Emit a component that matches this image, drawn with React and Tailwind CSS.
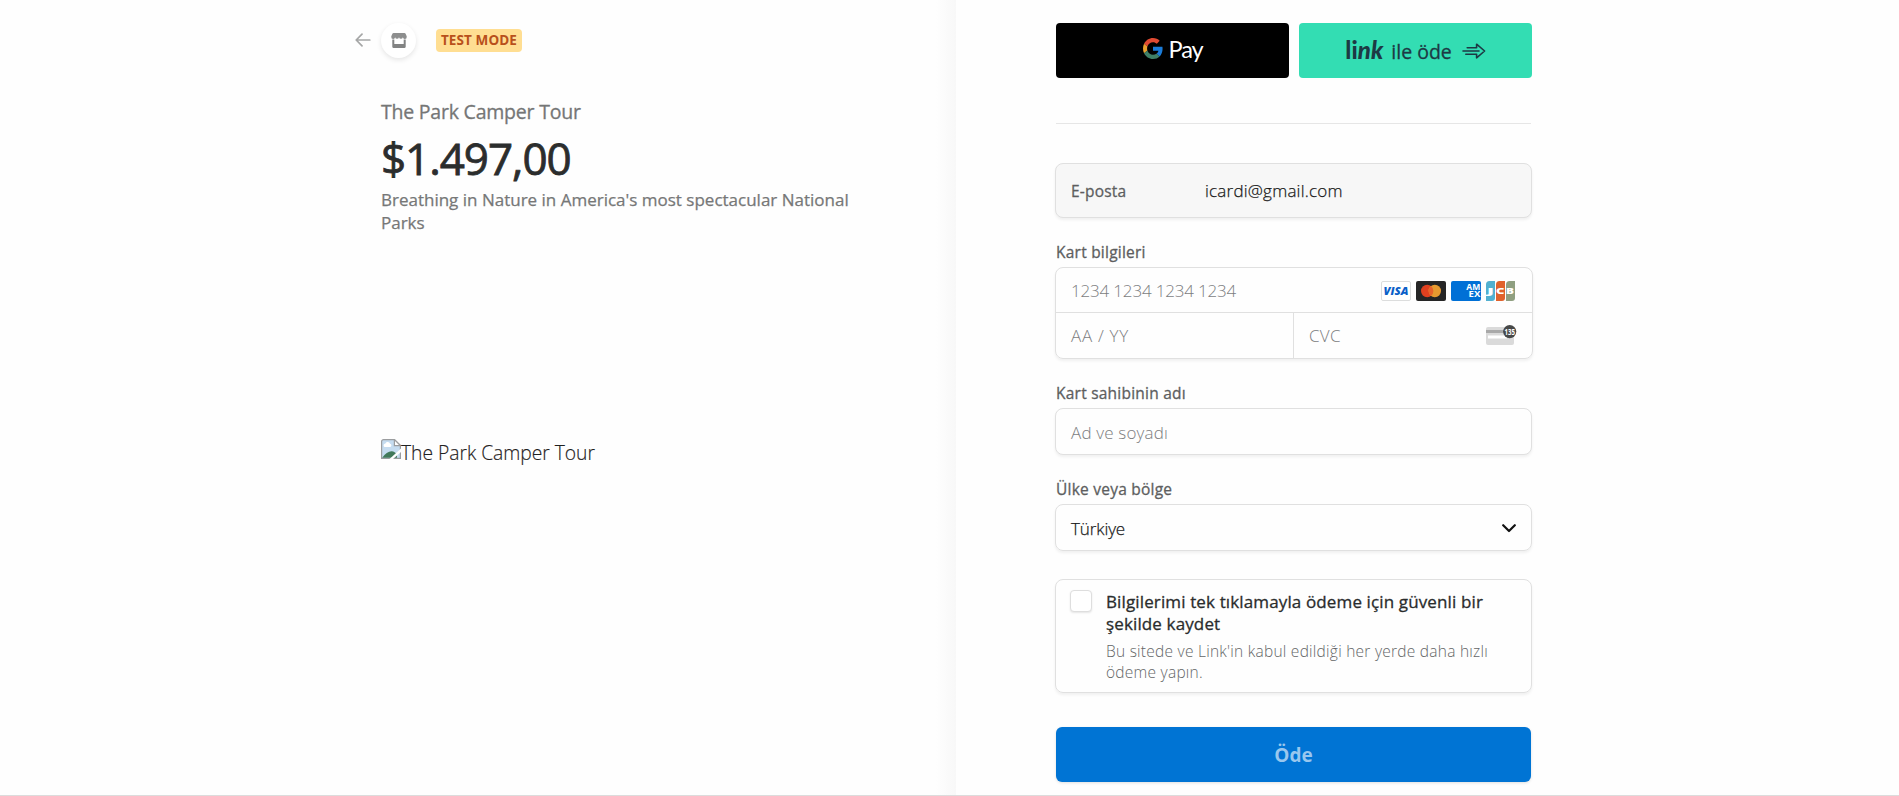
import React from "react";

function BackArrow() {
  return (
    <svg width="16" height="14" viewBox="0 0 16 14" fill="none" stroke="#a5a6a6" strokeWidth="1.7" strokeLinecap="round" strokeLinejoin="round">
      <path d="M14.8 7H1.4M7 1.2L1.2 7L7 12.8" />
    </svg>
  );
}

function StoreIcon() {
  return (
    <svg width="16" height="15" viewBox="0 0 16 15">
      <path d="M2.6 0h10.8c.6 0 1 .3 1.2.8l1.1 2.4v.8a1.9 1.9 0 0 1-3.8.3a2 2 0 0 1-3.9 0a2 2 0 0 1-3.9 0A1.9 1.9 0 0 1 .3 4v-.8L1.4 .8C1.6 .3 2 0 2.6 0z" fill="#8d8e8e" />
      <path d="M1.3 6.6h2V11h9.4V6.6h2v7.2c0 .7-.4 1.1-1.1 1.1H2.4c-.7 0-1.1-.4-1.1-1.1z" fill="#828383" />
    </svg>
  );
}

function GoogleG() {
  return (
    <svg width="20" height="21" viewBox="0 0 48 48" preserveAspectRatio="none">
      <path fill="#e04a32" d="M24 9.5c3.54 0 6.71 1.22 9.21 3.6l6.85-6.85C35.9 2.38 30.47 0 24 0 14.62 0 6.51 5.38 2.56 13.22l7.98 6.19C12.43 13.72 17.74 9.5 24 9.5z" />
      <path fill="#1a7bd8" d="M46.98 24.55c0-1.57-.15-3.09-.38-4.55H24v9.02h12.94c-.58 2.96-2.26 5.48-4.78 7.18l7.73 6c4.51-4.18 7.09-10.36 7.09-17.65z" />
      <path fill="#eaa02e" d="M10.53 28.59c-.48-1.45-.76-2.99-.76-4.59s.27-3.14.76-4.59l-7.98-6.19C.92 16.46 0 20.12 0 24c0 3.88.92 7.54 2.56 10.78l7.97-6.19z" />
      <path fill="#3f7f66" d="M24 48c6.48 0 11.93-2.13 15.89-5.81l-7.73-6c-2.15 1.45-4.92 2.3-8.16 2.3-6.26 0-11.57-4.22-13.47-9.91l-7.98 6.19C6.51 42.62 14.62 48 24 48z" />
    </svg>
  );
}

function LinkArrow() {
  return (
    <svg width="24" height="16" viewBox="0 0 24 16" fill="none" stroke="#1d3944" strokeWidth="1.6" strokeLinejoin="round" strokeLinecap="round">
      <path d="M5.2 4.8H14.6V1.2L22.6 8L14.6 14.8V11.2H3.8M1 8H17" />
    </svg>
  );
}

function Visa() {
  return (
    <svg width="30" height="20" viewBox="0 0 30 20">
      <rect x=".5" y=".5" width="29" height="19" rx="1.5" fill="#fff" stroke="#dcdddd" />
      <text x="15" y="14" textAnchor="middle" textLength="25" lengthAdjust="spacingAndGlyphs" fontFamily="Open Sans" fontWeight="800" fontStyle="italic" fontSize="11" fill="#0a5fc8">VISA</text>
    </svg>
  );
}

function Mastercard() {
  return (
    <svg width="30" height="20" viewBox="0 0 30 20">
      <rect width="30" height="20" rx="2" fill="#252525" />
      <circle cx="11.2" cy="10" r="6.2" fill="#e0401f" />
      <circle cx="18.8" cy="10" r="6.2" fill="#e79a2f" />
      <path d="M15 5.1a6.2 6.2 0 0 1 0 9.8a6.2 6.2 0 0 1 0-9.8z" fill="#e8622a" />
    </svg>
  );
}

function Amex() {
  return (
    <svg width="30" height="20" viewBox="0 0 30 20" fontFamily="Open Sans" fontWeight="700" fontSize="8" fill="#fff">
      <rect width="30" height="20" rx="2" fill="#0070d6" />
      <text x="15.3" y="8.8" textLength="14" lengthAdjust="spacingAndGlyphs">AM</text>
      <text x="17.6" y="16.4" textLength="11.8" lengthAdjust="spacingAndGlyphs">EX</text>
    </svg>
  );
}

function Jcb() {
  return (
    <svg width="29" height="20" viewBox="0 0 29 20" fontFamily="Open Sans" fontWeight="800" fontSize="9" fill="#fff" textAnchor="middle">
      <path d="M3.5 0H9V17a3 3 0 0 1-3 3H0V3.5A3.5 3.5 0 0 1 3.5 0z" fill="#52b0d0" />
      <path d="M13.5 0H19V17a3 3 0 0 1-3 3H10V3.5A3.5 3.5 0 0 1 13.5 0z" fill="#e0622c" />
      <path d="M23.5 0H29V17a3 3 0 0 1-3 3H20V3.5A3.5 3.5 0 0 1 23.5 0z" fill="#8f9f80" />
      <text x="4.6" y="13.4" textLength="7" lengthAdjust="spacingAndGlyphs">J</text>
      <text x="14.3" y="13.4" textLength="8.5" lengthAdjust="spacingAndGlyphs">C</text>
      <text x="24" y="13.4" textLength="8" lengthAdjust="spacingAndGlyphs">B</text>
    </svg>
  );
}

function CvcIcon() {
  return (
    <svg width="31" height="20" viewBox="0 0 31 20">
      <rect y="2" width="28" height="18" rx="2" fill="#dadada" />
      <rect y="5" width="28" height="3" fill="#a9a9a9" />
      <rect x="2" y="10.5" width="19" height="3" fill="#fff" />
      <circle cx="23.7" cy="6.6" r="6.6" fill="#474848" />
      <text x="23.7" y="9.6" textAnchor="middle" textLength="10.5" lengthAdjust="spacingAndGlyphs" fontFamily="Open Sans" fontWeight="700" fontSize="8" fill="#fff">135</text>
    </svg>
  );
}

function BrokenImage() {
  return (
    <svg width="20" height="20" viewBox="0 0 20 20">
      <path d="M.6 2.6A2 2 0 0 1 2.6.6H13.4L19.4 6.6V19.4H.6z" fill="#c5dcf0" stroke="#9b9d9f" strokeWidth="1.2" />
      <path d="M3.4 8a2 2 0 0 1 1-3.6a2.6 2.6 0 0 1 4.7.4A1.7 1.7 0 0 1 9.4 8z" fill="#fff" />
      <path d="M1.2 18.8C4 14.5 7.5 12.2 10.5 12.2C13 12.2 14.5 13.5 16 15.5V18.8z" fill="#41795a" />
      <path d="M13.4.6V6.6H19.4z" fill="#fff" stroke="#9b9d9f" strokeWidth="1.2" />
      <path d="M20 9.5V13L12 20H8.5z" fill="#fefefe" />
    </svg>
  );
}

function Label({ children }) {
  return <div className="h-5 pl-px text-[15.5px] leading-5 tracking-[0.23px] text-[#5d5e5f] [-webkit-text-stroke:0.3px]">{children}</div>;
}

const box = "rounded-lg border border-[#e0e0e0] shadow-[0_2px_3px_rgba(0,0,0,0.06)]";

function Product() {
  return (
    <section className="flex h-full w-[956px] shrink-0 flex-col bg-[linear-gradient(to_right,#fefefe_936px,#f8f8f8_956px)] pl-[355px]">
      <header className="mt-[22px] flex h-9 items-center">
        <BackArrow />
        <div className="ml-2.5 flex size-[35px] items-center justify-center rounded-full bg-white shadow-[0_2px_5px_rgba(0,0,0,0.1)]">
          <StoreIcon />
        </div>
        <span className="ml-5 flex h-[23px] w-[86px] items-center justify-center rounded bg-[#ffde92] pt-px text-[13.5px] font-bold tracking-[0.1px] text-[#b8501b]">TEST MODE</span>
      </header>
      <div className="mt-10 ml-[26px] w-[490px]">
        <h1 className="h-[33px] text-[19.5px] leading-7 tracking-[-0.22px] text-[#757676] [-webkit-text-stroke:0.3px]">The Park Camper Tour</h1>
        <div className="h-[57px] text-[44px] leading-[54px] tracking-[-1.05px] text-[#2b2d2d] [-webkit-text-stroke:0.8px]">$1.497,00</div>
        <p className="text-[17px] leading-[23px] text-[#767777] [-webkit-text-stroke:0.25px]">Breathing in Nature in America's most spectacular National Parks</p>
        <div className="mt-[205px] flex h-7 text-[19.3px] leading-7 font-light tracking-[-0.03px] text-[#1f2121] [-webkit-text-stroke:0.15px]">
          <BrokenImage />
          <span>The Park Camper Tour</span>
        </div>
      </div>
    </section>
  );
}

function Checkout() {
  return (
    <section className="flex w-[477px] flex-col pt-[23px]">
      <div className="flex gap-2.5 px-px">
        <button className="flex h-[55px] w-[233px] items-center justify-center rounded bg-black pb-1">
          <GoogleG />
          <span className="ml-1.5 font-[Lato] text-[23.5px] leading-6 tracking-[-1.1px] text-white">Pay</span>
        </button>
        <button className="-mr-px flex h-[55px] w-[233px] items-center justify-center rounded bg-[#33ddb3] text-[#1d3944]">
          <span className="flex pb-0.5 font-[Lato] text-[24px] leading-6 font-black tracking-[0.1px]">
            <span>li</span>
            <span className="italic">nk</span>
          </span>
          <span className="ml-2 pt-0.5 text-[19.5px] leading-6 [-webkit-text-stroke:0.3px]">ile öde</span>
          <span className="ml-2.5"><LinkArrow /></span>
        </button>
      </div>

      <div className="mx-px mt-[45px] h-px bg-[#e6e6e6]" />

      <div className={`${box} mt-[39px] flex h-[55px] items-center bg-[#f7f7f7] pl-[15px]`}>
        <span className="w-[134px] pt-0.5 text-[15.5px] tracking-[0.2px] text-[#5d5e5f] [-webkit-text-stroke:0.3px]">E-posta</span>
        <span className="text-[17px] font-light tracking-[0.22px] text-[#1a1b1b] [-webkit-text-stroke:0.25px]">icardi@gmail.com</span>
      </div>

      <div className="mt-6"><Label>Kart bilgileri</Label></div>
      <div className={`${box} mt-[5px] w-[478px] text-[17px] font-light text-[#7c7d7e]`}>
        <div className="flex h-[45px] items-center border-b border-[#e0e0e0] pl-[15px]">
          <span className="grow pt-0.5 tracking-[-0.18px]">1234 1234 1234 1234</span>
          <span className="mr-[17px] flex gap-[5px] pt-px">
            <Visa />
            <Mastercard />
            <Amex />
            <Jcb />
          </span>
        </div>
        <div className="flex h-[45px]">
          <div className="flex w-[238px] items-center border-r border-[#e0e0e0] pt-px pl-[15px] tracking-[0.7px]">AA / YY</div>
          <div className="flex grow items-center justify-between pl-[15px]">
            <span className="pt-px tracking-[0.3px]">CVC</span>
            <span className="mr-[15px] pb-0.5"><CvcIcon /></span>
          </div>
        </div>
      </div>

      <div className="mt-6"><Label>Kart sahibinin adı</Label></div>
      <div className={`${box} mt-[5px] flex h-[47px] items-center bg-[#fefefe] pt-0.5 pl-[15px] text-[17px] font-light tracking-[0.17px] text-[#7c7d7e]`}>Ad ve soyadı</div>

      <div className="mt-6"><Label>Ülke veya bölge</Label></div>
      <div className={`${box} mt-[5px] flex h-[47px] items-center justify-between pr-[15px] pl-[15px]`}>
        <span className="pt-0.5 text-[17px] font-light tracking-[-0.1px] text-[#1a1b1b] [-webkit-text-stroke:0.25px]">Türkiye</span>
        <svg className="mt-0.5" width="14" height="9" viewBox="0 0 14 9" fill="none" stroke="#111" strokeWidth="2.2" strokeLinecap="round" strokeLinejoin="round">
          <path d="M1.2 1.2L7 7L12.8 1.2" />
        </svg>
      </div>

      <div className={`${box} mt-7 flex h-[114px] pl-3.5`}>
        <span className="mt-2.5 size-[22px] shrink-0 rounded border border-[#dedede] bg-white shadow-[0_1px_2px_rgba(0,0,0,0.1)]" />
        <div className="ml-3.5 w-[400px]">
          <p className="mt-[11px] text-[17px] leading-[22.3px] tracking-[0.13px] text-[#2a2c2c] [-webkit-text-stroke:0.3px]">
            Bilgilerimi tek tıklamayla ödeme için güvenli bir
            <br />
            şekilde kaydet
          </p>
          <p className="mt-[5px] text-[15.5px] leading-[21px] font-light tracking-[0.25px] text-[#646667]">
            Bu sitede ve Link'in kabul edildiği her yerde daha hızlı
            <br />
            ödeme yapın.
          </p>
        </div>
      </div>

      <button className="mx-px mt-[34px] h-[55px] rounded-md bg-[#0074d4] pt-0.5 text-[19px] font-bold text-[#99c7ee] shadow-[0_1px_3px_rgba(0,0,0,0.12)]">Öde</button>
    </section>
  );
}

export default function App() {
  return (
    <main className="flex h-[796px] w-full overflow-hidden border-b border-[#dcdcdc] bg-[#fefefe] font-['Open_Sans',sans-serif]">
      <Product />
      <div className="ml-[99px]">
        <Checkout />
      </div>
    </main>
  );
}
